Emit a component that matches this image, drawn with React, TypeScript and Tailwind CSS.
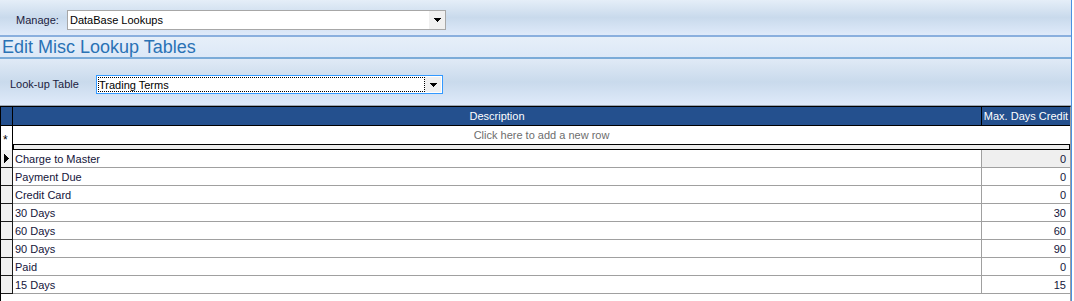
import React from "react";

function DownArrow() {
  return (
    <svg width="7" height="4" viewBox="0 0 7 4" shapeRendering="crispEdges">
      <rect x="0" y="0" width="7" height="1" fill="#000" />
      <rect x="1" y="1" width="5" height="1" fill="#000" />
      <rect x="2" y="2" width="3" height="1" fill="#000" />
      <rect x="3" y="3" width="1" height="1" fill="#000" />
    </svg>
  );
}

function RowArrow() {
  return (
    <svg width="5" height="9" viewBox="0 0 5 9" shapeRendering="crispEdges">
      <rect x="0" y="0" width="1" height="9" fill="#000" />
      <rect x="1" y="1" width="1" height="7" fill="#000" />
      <rect x="2" y="2" width="1" height="5" fill="#000" />
      <rect x="3" y="3" width="1" height="3" fill="#000" />
      <rect x="4" y="4" width="1" height="1" fill="#000" />
    </svg>
  );
}

const rows: { d: string; v: number }[] = [
  { d: "Charge to Master", v: 0 },
  { d: "Payment Due", v: 0 },
  { d: "Credit Card", v: 0 },
  { d: "30 Days", v: 30 },
  { d: "60 Days", v: 60 },
  { d: "90 Days", v: 90 },
  { d: "Paid", v: 0 },
  { d: "15 Days", v: 15 },
];

export default function App() {
  return (
    <div className="w-[1074px] h-[301px] flex bg-white overflow-hidden font-['Liberation_Sans',Arial,sans-serif] text-[11px]">
      <div className="w-[1071px] flex flex-col">
        {/* Manage bar */}
        <div className="h-[35px] bg-linear-to-b from-[#e5eef8] via-[#c9daec] to-[#dfeafa] flex items-start pt-[10px] pl-[16px]">
          <div className="w-[51px] h-[20px] leading-[21px] text-[#1c1c40]">Manage:</div>
          <div className="w-[379px] h-[20px] bg-white border border-[#a7a7a7] flex items-stretch">
            <div className="flex-1 pl-[2px] leading-[18px] text-black">DataBase Lookups</div>
            <div className="w-[16px] bg-[#f0f0f0] flex items-center justify-center">
              <DownArrow />
            </div>
          </div>
        </div>
        <div className="h-[2px] bg-[#8aafde]" />
        {/* Title */}
        <div className="h-[20px] bg-linear-to-b from-[#e6eff9] to-[#dce8f7] pl-[2px] text-[18px] leading-[20px] text-[#2a72b5]">
          Edit Misc Lookup Tables
        </div>
        <div className="h-[2px] bg-[#7babd8]" />
        {/* Lookup section */}
        <div className="h-[46px] bg-linear-to-b from-[#e0eaf6] via-[#c9daec] to-[#dfeafa] flex items-start pt-[16px] pl-[10px]">
          <div className="w-[86px] h-[19px] leading-[18px] text-[#1c1c40]">Look-up Table</div>
          <div className="w-[347px] h-[19px] bg-white border border-[#3399ff] flex items-stretch p-[1px]">
            <div className="flex-1 border border-dotted border-black leading-[14px] text-black">Trading Terms</div>
            <div className="w-[16px] bg-[#f0f0f0] flex items-center justify-center">
              <DownArrow />
            </div>
          </div>
        </div>
        <div className="h-[1px] bg-[#9ba7b4]" />
        {/* Grid */}
        <div className="flex-1 bg-white border-l border-t border-black border-r-[1px] border-r-[#a0a0a0] flex flex-col">
          {/* header */}
          <div className="h-[19px] flex bg-[#24508e] border-b border-black text-white leading-[19px]">
            <div className="w-[12px] border-r border-black" />
            <div className="w-[969px] border-r border-black text-center">Description</div>
            <div className="flex-1 text-center">Max. Days Credit</div>
          </div>
          {/* new row */}
          <div className="h-[24px] flex">
            <div className="w-[12px] border-r border-black relative">
              <span className="absolute left-[2px] top-[8px] leading-[12px] text-black text-[12px]">*</span>
            </div>
            <div className="flex-1 flex flex-col">
              <div className="h-[18px] leading-[19px] text-center text-[#6d6d6d]">Click here to add a new row</div>
              <div className="h-[6px] border border-black bg-[#ececec]" />
            </div>
          </div>
          {rows.map((r, i) => (
            <div key={r.d} className="h-[18px] flex">
              <div className="w-[12px] bg-[#f0f0f0] border-r border-b border-[#1a1a1a] flex items-center pl-[3px]">
                {i === 0 ? <RowArrow /> : null}
              </div>
              <div className="w-[969px] border-r border-b border-[#a0a0a0] pl-[2px] leading-[19px] text-[#14143a]">
                {r.d}
              </div>
              <div
                className={
                  "flex-1 border-b border-[#a0a0a0] pr-[4px] text-right leading-[19px] text-[#14143a] " +
                  (i === 0 ? "bg-[#efefef]" : "bg-white")
                }
              >
                {r.v}
              </div>
            </div>
          ))}
        </div>
      </div>
      <div className="w-[1px] bg-[#4a90e2]" />
      <div className="w-[2px] bg-white" />
    </div>
  );
}
